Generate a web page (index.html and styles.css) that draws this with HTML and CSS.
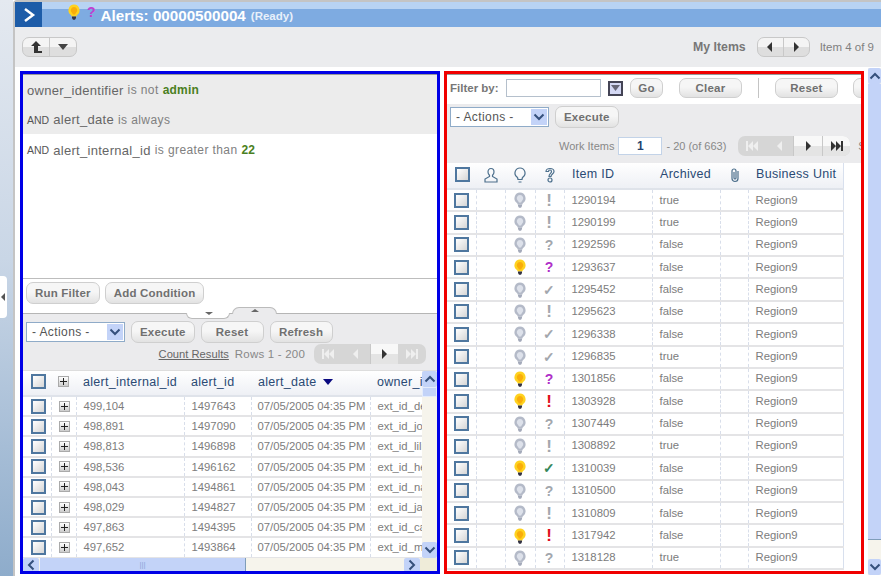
FILE: index.html
```html
<!DOCTYPE html>
<html>
<head>
	<title>Alerts: 00000500004</title>
	<meta charset="utf-8">
	<link rel="stylesheet" href="styles.css">
</head>

<body>
	<svg class="defs" width="0" height="0">
		<symbol id="bulb" viewBox="0 0 14 16"><path d="M7 .5a5.800 5.800 0 0 0-3.400 10.300c.7.500 1 1 1 1.700h4.800c0-.7.300-1.200 1-1.700A5.800 5.800 0 0 0 7 .5z"/><path class="core" d="M7 3a3.300 3.300 0 0 0-2 5.900c.5.400.8 1 .9 1.600h2.200c.1-.6.400-1.200.9-1.600A3.300 3.300 0 0 0 7 3z"/><path class="base" d="M5 12.500h4V14l-1 1.800H6L5 14z"/></symbol>
		<symbol id="first" viewBox="0 0 14 12"><path d="M1 1h2v10H1zM8 1v10L3 6zM13 1v10L8 6z"/></symbol>
		<symbol id="prev" viewBox="0 0 14 12"><path d="M9 1v10L4 6z"/></symbol>
		<symbol id="next" viewBox="0 0 14 12"><path d="M5 1v10l5-5z"/></symbol>
		<symbol id="last" viewBox="0 0 14 12"><path d="M1 1v10l5-5zM6 1v10l5-5zM11 1h2v10h-2z"/></symbol>
		<symbol id="chev-down" viewBox="0 0 12 8"><path d="M1.500 1.500 6 6l4.500-4.500" fill="none" stroke="currentColor" stroke-width="2"/></symbol>
		<symbol id="chev-up" viewBox="0 0 12 8"><path d="M1.500 6.500 6 2l4.500 4.500" fill="none" stroke="currentColor" stroke-width="2"/></symbol>
		<symbol id="chev-left" viewBox="0 0 8 12"><path d="M6.500 1.500 2 6l4.500 4.500" fill="none" stroke="currentColor" stroke-width="2"/></symbol>
		<symbol id="chev-right" viewBox="0 0 8 12"><path d="M1.500 1.500 6 6l-4.500 4.500" fill="none" stroke="currentColor" stroke-width="2"/></symbol>
	</svg>

	<div class="side"><span class="side-tab"></span></div>

	<div class="window">
		<div class="titlebar">
			<span class="nav-btn"><svg width="14" height="16" viewBox="0 0 14 16"><path d="M3 2l8 6-8 6" fill="none" stroke="#fff" stroke-width="2.500"/></svg></span>
			<svg class="ico bulb-on title-bulb"><use href="#bulb"/></svg>
			<span class="title-q">?</span>
			<span class="title-text">Alerts: 00000500004</span>
			<span class="title-state">(Ready)</span>
		</div>

		<div class="toolbar">
			<div class="seg">
				<span class="seg-btn"><svg width="16" height="14" viewBox="0 0 16 14"><path d="M8 1l5 5h-3v5h4v2H6V6H3z" fill="#333"/></svg></span>
				<span class="seg-btn"><svg width="12" height="6" viewBox="0 0 12 6"><path d="M1 0h10L6 6z" fill="#444"/></svg></span>
			</div>
			<span class="my-items">My Items</span>
			<div class="seg seg-nav">
				<span class="seg-btn"><svg class="pg"><use href="#prev"/></svg></span>
				<span class="seg-btn"><svg class="pg"><use href="#next"/></svg></span>
			</div>
			<span class="item-count">Item 4 of 9</span>
		</div>

		<div class="content">
			<div class="panel panel-blue">
				<div class="conds">
					<div class="cond cond-on"><span class="field">owner_identifier</span> <span class="op">is not</span> <b class="val">admin</b></div>
					<div class="cond cond-on"><span class="and">AND</span> <span class="field">alert_date</span> <span class="op">is always</span></div>
					<div class="cond"><span class="and">AND</span> <span class="field">alert_internal_id</span> <span class="op">is greater than</span> <b class="val">22</b></div>
				</div>
				<div class="filter-btns">
					<span class="btn">Run Filter</span>
					<span class="btn">Add Condition</span>
				</div>
				<div class="splitter">
					<span class="tab tab-down"></span>
					<span class="tab tab-up"></span>
				</div>
				<div class="bar">
					<div class="bar-row">
						<span class="select">- Actions -<span class="select-arrow"><svg width="12" height="8"><use href="#chev-down"/></svg></span></span>
						<span class="btn btn-w">Execute</span>
						<span class="btn btn-w">Reset</span>
						<span class="btn btn-w">Refresh</span>
					</div>
					<div class="bar-row bar-right">
						<span class="link">Count Results</span>
						<span class="muted">Rows 1 - 200</span>
						<div class="pager">
							<span class="pg-off"><svg class="pg"><use href="#first"/></svg></span>
							<span class="pg-off"><svg class="pg"><use href="#prev"/></svg></span>
							<span class="pg-on"><svg class="pg"><use href="#next"/></svg></span>
							<span class="pg-off"><svg class="pg"><use href="#last"/></svg></span>
						</div>
					</div>
				</div>
				<div class="grid-wrap">
					<div class="grid-clip">
						<table class="grid grid-left">
							<colgroup><col class="l1"><col class="l2"><col class="l3"><col class="l4"><col class="l5"><col class="l6"></colgroup>
							<tr class="head"><th><i class="check"></i></th><th><i class="plus"></i></th><th>alert_internal_id</th><th>alert_id</th><th>alert_date <i class="sort"></i></th><th>owner_identifier</th></tr>
							<tr><td><i class="check"></i></td><td><i class="plus"></i></td><td>499,104</td><td>1497643</td><td>07/05/2005 04:35 PM</td><td>ext_id_demo</td></tr>
							<tr><td><i class="check"></i></td><td><i class="plus"></i></td><td>498,891</td><td>1497090</td><td>07/05/2005 04:35 PM</td><td>ext_id_jones</td></tr>
							<tr><td><i class="check"></i></td><td><i class="plus"></i></td><td>498,813</td><td>1496898</td><td>07/05/2005 04:35 PM</td><td>ext_id_lilian</td></tr>
							<tr><td><i class="check"></i></td><td><i class="plus"></i></td><td>498,536</td><td>1496162</td><td>07/05/2005 04:35 PM</td><td>ext_id_helen</td></tr>
							<tr><td><i class="check"></i></td><td><i class="plus"></i></td><td>498,043</td><td>1494861</td><td>07/05/2005 04:35 PM</td><td>ext_id_nancy</td></tr>
							<tr><td><i class="check"></i></td><td><i class="plus"></i></td><td>498,029</td><td>1494827</td><td>07/05/2005 04:35 PM</td><td>ext_id_jack</td></tr>
							<tr><td><i class="check"></i></td><td><i class="plus"></i></td><td>497,863</td><td>1494395</td><td>07/05/2005 04:35 PM</td><td>ext_id_carl</td></tr>
							<tr><td><i class="check"></i></td><td><i class="plus"></i></td><td>497,652</td><td>1493864</td><td>07/05/2005 04:35 PM</td><td>ext_id_mary</td></tr>
						</table>
					</div>
					<div class="vscroll">
						<span class="sb-btn"><svg width="12" height="8"><use href="#chev-up"/></svg></span>
						<span class="sb-grip"></span>
						<span class="sb-fill"></span>
						<span class="sb-btn"><svg width="12" height="8"><use href="#chev-down"/></svg></span>
					</div>
				</div>
				<div class="hscroll">
					<span class="sb-btn sb-h"><svg width="8" height="12"><use href="#chev-left"/></svg></span>
					<span class="sb-thumb">|||</span>
					<span class="sb-fill"></span>
					<span class="sb-btn sb-h"><svg width="8" height="12"><use href="#chev-right"/></svg></span>
					<span class="sb-corner"></span>
				</div>
			</div>

			<div class="panel panel-red">
				<div class="filter-row">
					<span class="filter-label">Filter by:</span>
					<span class="input input-filter"></span>
					<span class="drop"><svg width="9" height="6" viewBox="0 0 9 6"><path d="M0 0h9L4.500 6z" fill="#667"/></svg></span>
					<span class="btn btn-go">Go</span>
					<span class="btn btn-w btn-clear">Clear</span>
					<span class="vline"></span>
					<span class="btn btn-w">Reset</span>
					<span class="btn btn-w btn-cut">Save</span>
				</div>
				<div class="bar bar-red">
					<div class="bar-row">
						<span class="select">- Actions -<span class="select-arrow"><svg width="12" height="8"><use href="#chev-down"/></svg></span></span>
						<span class="btn btn-w">Execute</span>
					</div>
					<div class="bar-row work-row">
						<span class="muted">Work Items</span>
						<span class="input input-page">1</span>
						<span class="muted">- 20 (of 663)</span>
						<div class="pager">
							<span class="pg-off"><svg class="pg"><use href="#first"/></svg></span>
							<span class="pg-off"><svg class="pg"><use href="#prev"/></svg></span>
							<span class="pg-on"><svg class="pg"><use href="#next"/></svg></span>
							<span class="pg-on"><svg class="pg"><use href="#last"/></svg></span>
						</div>
						<span class="muted">Size</span>
					</div>
				</div>
				<table class="grid grid-right">
					<colgroup><col class="r1"><col class="r2"><col class="r3"><col class="r4"><col class="r5"><col class="r6"><col class="r7"><col class="r8"></colgroup>
					<tr class="head">
						<th><i class="check"></i></th>
						<th><svg class="head-ico" viewBox="0 0 16 16"><path d="M8 1.500c-2 0-3 1.500-3 3.500 0 1.500.6 2.500 1.500 3.300v1.200L2 12v3h12v-3l-4.500-2.500V8.300C10.400 7.500 11 6.500 11 5c0-2-1-3.500-3-3.500z"/></svg></th>
						<th><svg class="head-ico" viewBox="0 0 16 16"><path d="M8 1a5 5 0 0 0-3 9c.6.600 1 1.500 1 2.500h4c0-1 .4-1.900 1-2.500a5 5 0 0 0-3-9zM6.500 15h3"/></svg></th>
						<th><svg class="head-ico" viewBox="0 0 16 16"><path d="M4 4.500C4 2.500 6 1.500 8 1.500s4 1 4 3c0 2.500-3 2.500-3 5H7c0-3 2.500-3 2.500-5 0-1-.7-1.500-1.500-1.500s-1.500.5-1.500 1.500z"/><circle cx="8" cy="13" r="2"/></svg></th>
						<th>Item ID</th>
						<th>Archived</th>
						<th><svg class="head-ico" viewBox="0 0 16 16"><path d="M11 4v7.500a3 3 0 0 1-6 0V4a2 2 0 0 1 4 0v7a1 1 0 0 1-2 0V5"/></svg></th>
						<th>Business Unit</th>
					</tr>
					<tr><td><i class="check"></i></td><td></td><td><svg class="ico bulb-off"><use href="#bulb"/></svg></td><td><b class="mark m-off m-bang">!</b></td><td>1290194</td><td>true</td><td></td><td>Region9</td></tr>
					<tr><td><i class="check"></i></td><td></td><td><svg class="ico bulb-off"><use href="#bulb"/></svg></td><td><b class="mark m-off m-bang">!</b></td><td>1290199</td><td>true</td><td></td><td>Region9</td></tr>
					<tr><td><i class="check"></i></td><td></td><td><svg class="ico bulb-off"><use href="#bulb"/></svg></td><td><b class="mark m-off">?</b></td><td>1292596</td><td>false</td><td></td><td>Region9</td></tr>
					<tr><td><i class="check"></i></td><td></td><td><svg class="ico bulb-on"><use href="#bulb"/></svg></td><td><b class="mark m-q">?</b></td><td>1293637</td><td>false</td><td></td><td>Region9</td></tr>
					<tr><td><i class="check"></i></td><td></td><td><svg class="ico bulb-off"><use href="#bulb"/></svg></td><td><b class="mark m-off">✓</b></td><td>1295452</td><td>false</td><td></td><td>Region9</td></tr>
					<tr><td><i class="check"></i></td><td></td><td><svg class="ico bulb-off"><use href="#bulb"/></svg></td><td><b class="mark m-off m-bang">!</b></td><td>1295623</td><td>false</td><td></td><td>Region9</td></tr>
					<tr><td><i class="check"></i></td><td></td><td><svg class="ico bulb-off"><use href="#bulb"/></svg></td><td><b class="mark m-off">✓</b></td><td>1296338</td><td>false</td><td></td><td>Region9</td></tr>
					<tr><td><i class="check"></i></td><td></td><td><svg class="ico bulb-off"><use href="#bulb"/></svg></td><td><b class="mark m-off">✓</b></td><td>1296835</td><td>true</td><td></td><td>Region9</td></tr>
					<tr><td><i class="check"></i></td><td></td><td><svg class="ico bulb-on"><use href="#bulb"/></svg></td><td><b class="mark m-q">?</b></td><td>1301856</td><td>false</td><td></td><td>Region9</td></tr>
					<tr><td><i class="check"></i></td><td></td><td><svg class="ico bulb-on"><use href="#bulb"/></svg></td><td><b class="mark m-ex m-bang">!</b></td><td>1303928</td><td>false</td><td></td><td>Region9</td></tr>
					<tr><td><i class="check"></i></td><td></td><td><svg class="ico bulb-off"><use href="#bulb"/></svg></td><td><b class="mark m-off">?</b></td><td>1307449</td><td>false</td><td></td><td>Region9</td></tr>
					<tr><td><i class="check"></i></td><td></td><td><svg class="ico bulb-off"><use href="#bulb"/></svg></td><td><b class="mark m-off m-bang">!</b></td><td>1308892</td><td>true</td><td></td><td>Region9</td></tr>
					<tr><td><i class="check"></i></td><td></td><td><svg class="ico bulb-on"><use href="#bulb"/></svg></td><td><b class="mark m-ok">✓</b></td><td>1310039</td><td>false</td><td></td><td>Region9</td></tr>
					<tr><td><i class="check"></i></td><td></td><td><svg class="ico bulb-off"><use href="#bulb"/></svg></td><td><b class="mark m-off">?</b></td><td>1310500</td><td>false</td><td></td><td>Region9</td></tr>
					<tr><td><i class="check"></i></td><td></td><td><svg class="ico bulb-off"><use href="#bulb"/></svg></td><td><b class="mark m-off m-bang">!</b></td><td>1310809</td><td>false</td><td></td><td>Region9</td></tr>
					<tr><td><i class="check"></i></td><td></td><td><svg class="ico bulb-on"><use href="#bulb"/></svg></td><td><b class="mark m-ex m-bang">!</b></td><td>1317942</td><td>false</td><td></td><td>Region9</td></tr>
					<tr><td><i class="check"></i></td><td></td><td><svg class="ico bulb-off"><use href="#bulb"/></svg></td><td><b class="mark m-off">?</b></td><td>1318128</td><td>true</td><td></td><td>Region9</td></tr>
				</table>
			</div>

			<div class="page-scroll">
				<span class="sb-btn"><svg width="12" height="8"><use href="#chev-up"/></svg></span>
				<span class="sb-thumb-v"></span>
				<span class="sb-fill"></span>
				<span class="sb-btn"><svg width="12" height="8"><use href="#chev-down"/></svg></span>
			</div>
		</div>
	</div>
</body>
</html>
```

FILE: styles.css
```css
html, body{
	margin: 0;
	height: 100%;
}

body{
	width: 881px;
	height: 576px;
	display: flex;
	overflow: hidden;
	background: #fff;
	font-family: 'Liberation Sans', Arial, sans-serif;
	font-size: 12px;
	color: #666;
}

.defs{
	position: absolute;
}

/* left strip */
.side{
	position: relative;
	width: 13px;
	flex: none;
	background: linear-gradient(#e4e9f0, #c9d6e6 45%, #8eaccb);
}

.side-tab{
	position: absolute;
	left: 0;
	top: 276px;
	width: 7px;
	height: 42px;
	background: #fff;
	border-radius: 0 4px 4px 0;
}

.side-tab:after{
	content: "";
	position: absolute;
	left: 1px;
	top: 17px;
	border: 4px solid transparent;
	border-left-width: 0;
	border-right-color: #555;
}

.window{
	flex: 1;
	min-width: 0;
	display: flex;
	flex-direction: column;
	border-left: 2px solid #c4c4c4;
	border-top: 2px solid #c4c4c4;
	border-radius: 4px 0 0 0;
}

/* title bar */
.titlebar{
	height: 25px;
	display: flex;
	align-items: center;
	background: linear-gradient(#b8d3f3 0, #b8d3f3 7px, #7eabe1 7px);
	flex: none;
}

.nav-btn{
	width: 27px;
	height: 25px;
	display: flex;
	align-items: center;
	justify-content: center;
	background: #1d5ca8;
	margin-right: 25px;
}

.ico{
	width: 14px;
	height: 16px;
	display: block;
}

.bulb-on{
	fill: #ffd21f;
	--core: #f9ad0a;
	--base: #334;
}

.bulb-off{
	fill: #b4bac8;
	--core: #dde1ea;
	--base: #a4aaba;
}

.core{
	fill: var(--core);
}

.base{
	fill: var(--base);
}

.title-bulb{
	margin-top: -5px;
}

.title-q{
	margin: -5px 0 0 6px;
	color: #c040d0;
	font-weight: bold;
	font-size: 14px;
}

.title-text{
	margin: 1px 0 0 5px;
	color: #fff;
	font-weight: bold;
	font-size: 15.200px;
}

.title-state{
	margin: 2px 0 0 5px;
	color: #e8f0fa;
	font-weight: bold;
	font-size: 11.500px;
}

/* toolbar */
.toolbar{
	height: 40px;
	flex: none;
	display: flex;
	align-items: center;
	padding: 0 7px 0 7px;
	background: #ebecee;
}

.seg{
	display: flex;
	height: 18px;
	border: 1px solid #c8c8c8;
	border-radius: 7px;
	overflow: hidden;
	background: linear-gradient(#f4f4f4 50%, #dedede 50%);
}

.seg-btn{
	width: 26px;
	display: flex;
	align-items: center;
	justify-content: center;
}

.seg-nav .seg-btn{
	width: 25px;
}

.seg-btn + .seg-btn{
	border-left: 1px solid #c8c8c8;
}

.my-items{
	margin: 0 11px 0 auto;
	font-weight: bold;
	font-size: 12.300px;
	color: #777;
}

.item-count{
	margin-left: 10px;
	font-size: 11.500px;
	color: #808080;
	white-space: nowrap;
}

.pg{
	width: 14px;
	height: 12px;
	fill: #333;
}

/* panels */
.content{
	flex: 1;
	min-height: 0;
	display: flex;
	padding: 4px 0 0 5px;
	background: #fff;
}

.panel{
	width: 414px;
	height: 497px;
	flex: none;
	display: flex;
	flex-direction: column;
	overflow: hidden;
}

.panel:before{
	content: "";
	height: 1px;
	flex: none;
	background: #999;
}

.panel-blue{
	border: 3px solid #0000e6;
}

.panel-red{
	margin-left: 4px;
	border: 3px solid #f00000;
}

.conds{
	height: 203px;
	flex: none;
	border-bottom: 1px solid #bdbdbd;
}

.cond{
	height: 30px;
	display: flex;
	align-items: center;
	gap: 4px;
	padding-left: 4px;
	white-space: pre;
}

.cond-on{
	background: #ececec;
}

.cond-on + .cond-on{
	height: 29px;
}

.cond:last-child{
	margin-top: 1px;
}

.field{
	font-size: 13px;
	letter-spacing: .3px;
	color: #666;
}

.op{
	font-size: 12px;
	letter-spacing: .4px;
	color: #808080;
}

.and{
	font-size: 10.500px;
	color: #555;
}

.val{
	font-size: 12px;
	letter-spacing: .2px;
	color: #4a7f22;
}

.filter-btns{
	height: 31px;
	flex: none;
	display: flex;
	align-items: flex-start;
	gap: 5px;
	padding: 3px 0 0 3px;
}

.btn{
	height: 20px;
	flex: none;
	display: flex;
	align-items: center;
	justify-content: center;
	padding: 0 8px;
	border: 1px solid #cfcfcf;
	border-radius: 7px;
	background: linear-gradient(#f6f6f6 45%, #e2e2e2 100%);
	font-weight: bold;
	font-size: 11.500px;
	color: #707070;
	letter-spacing: .2px;
}

.btn-w{
	min-width: 45px;
}

.splitter{
	position: relative;
	height: 1px;
	flex: none;
	background: #b5b5b5;
	z-index: 1;
}

.tab{
	position: absolute;
	border: 1px solid #bbb;
	box-sizing: border-box;
	display: block;
}

.tab:after{
	content: "";
	position: absolute;
	left: 18px;
	border: 4px solid transparent;
	border-top-width: 3px;
	border-bottom-width: 3px;
}

.tab-down{
	left: 163px;
	top: 0;
	width: 44px;
	height: 6px;
	background: #fff;
	border-top: 0;
	border-radius: 0 0 8px 8px;
}

.tab-down:after{
	top: -1px;
	border-top-color: #666;
}

.tab-up{
	left: 209px;
	top: -6px;
	width: 45px;
	height: 7px;
	background: #ebebed;
	border-bottom: 0;
	border-radius: 8px 8px 0 0;
}

.tab-up:after{
	top: -2px;
	border-bottom-color: #666;
}

.bar{
	height: 57px;
	flex: none;
	background: #ebebed;
	border-bottom: 1px solid #ddd;
	padding-top: 6px;
	box-sizing: border-box;
	display: flex;
	flex-direction: column;
}

.bar-row{
	height: 24px;
	flex: none;
	display: flex;
	align-items: center;
	gap: 6px;
	padding-left: 3px;
}

.bar-right{
	height: 20px;
	justify-content: flex-end;
	padding-right: 11px;
}

.select{
	width: 99px;
	height: 20px;
	flex: none;
	position: relative;
	display: flex;
	align-items: center;
	padding-left: 5px;
	box-sizing: border-box;
	background: #fff;
	border: 1px solid #8fabc8;
	font-size: 12px;
	letter-spacing: .4px;
	color: #555;
}

.select-arrow{
	position: absolute;
	right: 1px;
	top: 1px;
	bottom: 1px;
	width: 16px;
	display: flex;
	align-items: center;
	justify-content: center;
	background: #c3d3f8;
	color: #35507c;
}

.link{
	text-decoration: underline;
	font-size: 11.200px;
	color: #666;
}

.muted{
	font-size: 11.500px;
	letter-spacing: .2px;
	color: #888;
	white-space: nowrap;
}

.pager{
	height: 20px;
	width: 112px;
	flex: none;
	margin-left: 3px;
	display: flex;
	border-radius: 7px;
	overflow: hidden;
	background: #d6d6d6;
}

.pager span{
	flex: 1;
	display: flex;
	align-items: center;
	justify-content: center;
}

.pg-off .pg{
	fill: #efefef;
}

.pg-on{
	background: linear-gradient(#f8f8f8 50%, #e4e4e4 50%);
	border-left: 1px solid #c8c8c8;
}

/* grids */
.grid-wrap{
	height: 187px;
	flex: none;
	display: flex;
}

.grid-clip{
	width: 399px;
	flex: none;
	overflow: hidden;
}

.grid{
	border-collapse: collapse;
	table-layout: fixed;
	font-size: 11.300px;
}

.grid th{
	height: 25px;
	padding: 0 0 3px 8px;
	box-sizing: border-box;
	text-align: left;
	font-weight: normal;
	font-size: 12.500px;
	letter-spacing: .3px;
	color: #2a4a74;
	background: linear-gradient(#fff, #eef0f5);
	border-bottom: 2px solid #dfe3ea;
	white-space: nowrap;
	overflow: hidden;
}

.grid td{
	padding: 0 0 0 7px;
	color: #7c7c7c;
	border-bottom: 2px solid #e4e4e6;
	border-left: 1px dashed #d8deea;
	white-space: nowrap;
	overflow: hidden;
}

.grid td:first-child{
	border-left: 0;
}

.grid-left{
	width: 399px;
}

.grid-left th{
	padding-left: 7px;
}

.grid-left td{
	height: 18.200px;
}

.grid-left td:nth-child(5){
	padding-left: 6px;
}

.grid-left td:first-child,
.grid-left th:first-child{
	padding-left: 8px;
}

.l1{ width: 28px; }
.l2{ width: 25px; }
.l3{ width: 108px; }
.l4{ width: 67px; }
.l5{ width: 119px; }
.l6{ width: 52px; }

.grid-right{
	width: 396px;
	flex: none;
}

.grid-right td{
	height: 20.360px;
}

.grid-right th{
	height: 26px;
	padding-left: 8px;
	padding-bottom: 2px;
}

.grid-right tr > :last-child{
	border-right: 1px solid #d8e0ee;
}

.r1{ width: 29px; }
.r2{ width: 29px; }
.r3{ width: 30px; }
.r4{ width: 29px; }
.r5{ width: 88px; }
.r6{ width: 68px; }
.r7{ width: 28px; }
.r8{ width: 95px; }

.check{
	display: block;
	width: 11px;
	height: 11px;
	border: 2px solid #4f779f;
	background: linear-gradient(135deg, #fff, #d6d6d6);
}

.plus{
	display: block;
	position: relative;
	width: 9px;
	height: 9px;
	border: 1px solid #aaa;
	background: linear-gradient(#fff, #ccc);
}

.plus:before,
.plus:after{
	content: "";
	position: absolute;
	background: #222;
}

.plus:before{
	left: 1px;
	top: 4px;
	width: 7px;
	height: 1px;
}

.plus:after{
	left: 4px;
	top: 1px;
	width: 1px;
	height: 7px;
}

.sort{
	display: inline-block;
	margin-left: 3px;
	border: 5px solid transparent;
	border-bottom-width: 0;
	border-top: 6px solid #0a0a80;
	vertical-align: 1px;
}

.head-ico{
	display: block;
	width: 16px;
	height: 16px;
	margin-left: -1px;
	fill: none;
	stroke: #4c6f8c;
	stroke-width: 1.200;
}

.grid-right th,
.grid-right td{
	line-height: 1;
}

.mark{
	display: block;
	width: 13px;
	text-align: center;
	font-size: 14px;
}

.m-bang{
	font-size: 17px;
}

.m-off{
	color: #a3a7ad;
}

.m-q{
	color: #b030c8;
}

.m-ex{
	color: #e0101c;
}

.m-ok{
	color: #35875a;
}

/* scrollbars */
.vscroll{
	flex: 1;
	display: flex;
	flex-direction: column;
	background: #f6f4ec;
}

.sb-btn{
	flex: none;
	height: 16px;
	display: flex;
	align-items: center;
	justify-content: center;
	background: #c3d3f8;
	color: #35507c;
	border-radius: 2px;
}

.sb-grip{
	flex: none;
	height: 10px;
	background: #c3d3f8;
	border: 1px solid #e4ecfc;
	box-sizing: border-box;
}

.sb-fill{
	flex: 1;
}

.hscroll{
	flex: 1;
	display: flex;
	background: #f6f4ec;
}

.sb-h{
	width: 16px;
	height: auto;
}

.sb-thumb{
	width: 206px;
	flex: none;
	margin-left: 1px;
	text-align: center;
	line-height: 14px;
	font-size: 8px;
	color: #8ea6d8;
	background: #c3d3f8;
	border-right: 1px solid #7f9db9;
	box-sizing: border-box;
}

.sb-corner{
	width: 17px;
	flex: none;
	background: #efecd9;
}

.filter-row{
	height: 29px;
	flex: none;
	display: flex;
	align-items: center;
	padding: 0 0 3px 3px;
	box-sizing: border-box;
	overflow: hidden;
	background: #fff;
}

.filter-label{
	width: 56px;
	flex: none;
	font-weight: bold;
	font-size: 11.500px;
	color: #777;
}

.input{
	box-sizing: border-box;
	flex: none;
	background: #fff;
	border: 1px solid #b5c0cc;
}

.input-filter{
	width: 95px;
	height: 18px;
}

.drop{
	width: 15px;
	height: 15px;
	flex: none;
	margin: 0 7px;
	display: flex;
	align-items: center;
	justify-content: center;
	box-sizing: border-box;
	border: 2px solid #445;
	background: #d4d8f4;
}

.btn-go{
	width: 33px;
	padding: 0;
	box-sizing: border-box;
}

.btn-clear{
	width: 63px;
	margin-left: 16px;
	padding: 0;
	box-sizing: border-box;
}

.vline{
	width: 1px;
	height: 20px;
	flex: none;
	margin: 0 16px;
	background: #c4c4c4;
}

.filter-row .btn-w:not(.btn-clear){
	width: 63px;
	padding: 0;
	box-sizing: border-box;
}

.filter-row .btn-cut{
	margin-left: 15px;
}

.bar-red{
	height: 59px;
	border-bottom: 0;
	padding-top: 3px;
	gap: 9px;
}

.bar-red .bar-row{
	height: 20px;
}

.work-row{
	padding-left: 112px;
	gap: 4px;
}

.work-row .muted{
	font-size: 11px;
	letter-spacing: 0;
}

.work-row .pager{
	margin-left: 8px;
}

.work-row .pager + .muted{
	margin-left: 4px;
}

.input-page{
	width: 44px;
	height: 18px;
	text-align: center;
	line-height: 16px;
	font-weight: bold;
	font-size: 12px;
	color: #24426e;
	border-color: #c3d3e8;
}

.page-scroll{
	width: 13px;
	flex: none;
	margin-left: 4px;
	margin-top: -3px;
	height: 507px;
	display: flex;
	flex-direction: column;
	background: #f6f4ec;
}

.sb-thumb-v{
	height: 456px;
	flex: none;
	background: #c3d3f8;
	border-bottom: 1px solid #7f9db9;
	box-sizing: border-box;
}
```
